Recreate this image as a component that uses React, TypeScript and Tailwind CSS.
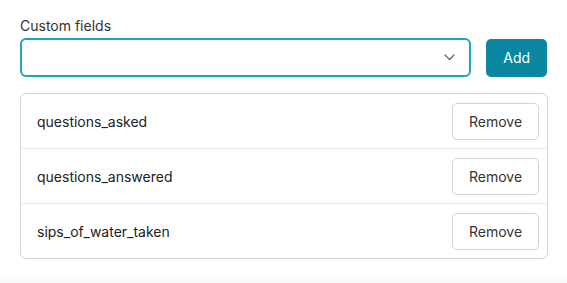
import React from "react";

const rows = ["questions_asked", "questions_answered", "sips_of_water_taken"];

export default function App() {
  return (
    <div className="w-[567px] h-[283px] bg-white flex flex-col" style={{ fontFamily: "Inter, 'Noto Sans', sans-serif" }}>
      <div className="flex-1 flex flex-col px-[20px] pt-[16px]">
        <div className="text-[14px] leading-[20px] text-[#333]">Custom fields</div>
        <div className="flex items-center mt-[2px]">
          <div className="w-[453px] h-[39px] border-2 border-[#17a8bf] rounded-[6px] flex items-center justify-end pr-[14px]">
            <svg width="11" height="7" viewBox="0 0 11 7" fill="none">
              <path d="M1 1l4.5 4.5L10 1" stroke="#666" strokeWidth="1.3" strokeLinecap="round" strokeLinejoin="round" />
            </svg>
          </div>
          <button className="ml-[15px] w-[61px] h-[38px] rounded-[5px] bg-[#0b87a1] text-white text-[14px]">Add</button>
        </div>
        <div className="mt-[16px] w-[528px] border border-[#d4d4d4] rounded-[6px] flex flex-col">
          {rows.map((r, i) => (
            <div key={r} className={`flex items-center justify-between pl-[16px] pr-[8px] ${i > 0 ? "h-[55px] border-t border-[#e6e6e6]" : "h-[54px]"}`}>
              <span className="text-[14px] text-[#222]">{r}</span>
              <button className="w-[87px] h-[37px] border border-[#d4d4d4] rounded-[5px] bg-white text-[14px] text-[#333]">Remove</button>
            </div>
          ))}
        </div>
      </div>
      <div className="h-[6px] bg-[#fafafa]" />
    </div>
  );
}
